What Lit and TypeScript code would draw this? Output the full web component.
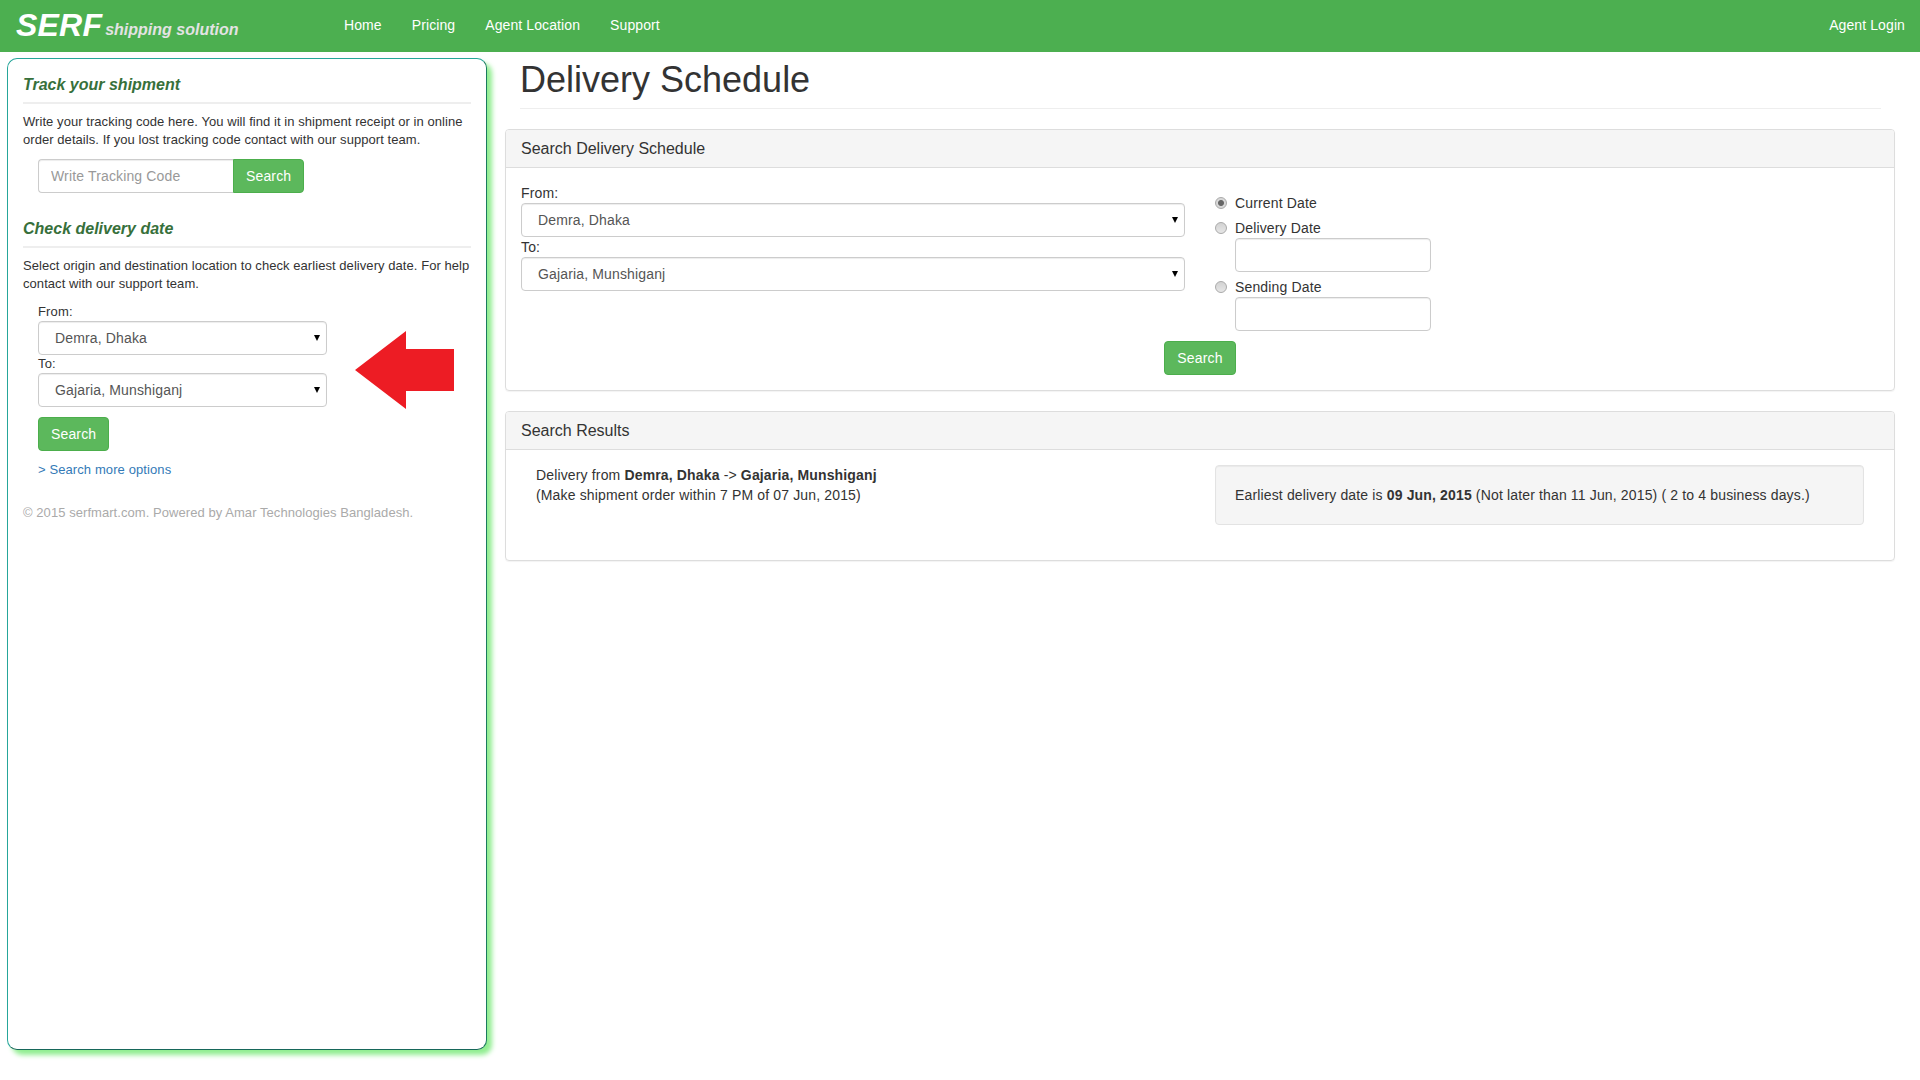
import { LitElement, html, css } from 'lit';

const LOCATIONS = ['Demra, Dhaka', 'Gajaria, Munshiganj'];

class AppRoot extends LitElement {
  static styles = css`
    :host {
      display: block;
      font-family: 'Liberation Sans', Arial, sans-serif;
      font-size: 14px;
      line-height: 20px;
      letter-spacing: 0.15px;
      color: #333;
      background: #fff;
      height: 1080px;
      overflow: hidden;
    }
    * {
      box-sizing: border-box;
    }
    .nav {
      display: flex;
      align-items: flex-start;
      height: 52px;
      background: #4caf50;
      color: #fff;
      letter-spacing: 0.1px;
    }
    .brand {
      display: flex;
      align-items: baseline;
      width: 329px;
      padding: 6px 0 0 16px;
      font-weight: bold;
      font-style: italic;
      white-space: nowrap;
      letter-spacing: 0;
    }
    .brand b {
      font-size: 32px;
      line-height: 38px;
      letter-spacing: 0.2px;
    }
    .brand span {
      position: relative;
      top: -1px;
      margin-left: 3px;
      font-size: 16px;
      color: #e3e3e3;
    }
    .nav a {
      padding: 15px;
      color: #fff;
    }
    .nav .login {
      margin-left: auto;
    }
    .page {
      display: flex;
      align-items: flex-start;
    }
    .side {
      position: relative;
      flex: none;
      width: 480px;
      height: 992px;
      margin: 6px 0 0 7px;
      padding: 16px 15px;
      background: #fff;
      border: 1px solid;
      border-color: #26a69a #1a7a5e #17675a #26a69a;
      border-radius: 10px;
      box-shadow: 5px 5px 5px #90ee90;
    }
    h4 {
      margin: 0;
      padding-bottom: 7px;
      border-bottom: 2px solid #eee;
      font-size: 16px;
      line-height: 20px;
      font-style: italic;
      font-weight: bold;
      color: #37703b;
      letter-spacing: 0;
    }
    .side p {
      margin: 9px 0 10px;
      font-size: 13px;
      line-height: 18px;
      letter-spacing: 0.06px;
      white-space: nowrap;
    }
    .track {
      display: flex;
      margin: 0 0 26px 15px;
    }
    .track input {
      width: 195px;
      border-radius: 4px 0 0 4px;
      border-right: 0;
    }
    .track button {
      width: 71px;
      border-radius: 0 4px 4px 0;
    }
    .side-form {
      margin-left: 15px;
    }
    .side-form label {
      display: block;
      font-size: 13px;
      line-height: 18px;
    }
    .side-form .select {
      width: 289px;
    }
    .side-form button {
      margin-top: 10px;
    }
    .more {
      display: block;
      margin-top: 9px;
      font-size: 13px;
      letter-spacing: 0.1px;
      color: #337ab7;
    }
    .side p.copy {
      margin-top: 24px;
      color: #aaa;
    }
    .arrow {
      position: absolute;
      left: 347px;
      top: 272px;
    }
    input,
    .select select {
      display: block;
      width: 100%;
      height: 34px;
      padding: 6px 12px;
      border: 1px solid #ccc;
      border-radius: 4px;
      background: #fff;
      box-shadow: inset 0 1px 1px rgba(0, 0, 0, 0.075);
      font: inherit;
      font-size: 14px;
      letter-spacing: inherit;
      color: #555;
      outline: none;
    }
    input::placeholder {
      color: #999;
    }
    .select {
      position: relative;
    }
    .select select {
      appearance: none;
      padding-left: 16px;
    }
    .select::after {
      content: '';
      position: absolute;
      right: 7px;
      top: 14px;
      border: 3.5px solid transparent;
      border-top: 6px solid #000;
      border-bottom: 0;
    }
    button {
      height: 34px;
      padding: 6px 12px;
      border: 1px solid #4cae4c;
      border-radius: 4px;
      background: #5cb85c;
      color: #fff;
      font: inherit;
      font-size: 14px;
      letter-spacing: inherit;
    }
    .main {
      flex: none;
      width: 1390px;
      margin-left: 18px;
    }
    .head {
      height: 57px;
      margin: 0 14px 0 15px;
      padding-top: 8px;
      border-bottom: 1px solid #eee;
    }
    h1 {
      margin: 0;
      font-size: 36px;
      line-height: 40px;
      font-weight: 500;
      letter-spacing: 0;
    }
    .panel {
      margin-top: 20px;
      border: 1px solid #ddd;
      border-radius: 4px;
      box-shadow: 0 1px 1px rgba(0, 0, 0, 0.05);
    }
    .panel-head {
      padding: 9px 15px;
      border-bottom: 1px solid #ddd;
      border-radius: 3px 3px 0 0;
      background: #f5f5f5;
      font-size: 16px;
      line-height: 19px;
      letter-spacing: 0;
    }
    .panel-body {
      padding: 15px;
    }
    .cols {
      display: grid;
      grid-template-columns: 1fr 1fr;
      column-gap: 30px;
    }
    .radio {
      display: flex;
      align-items: center;
      gap: 8px;
      margin-top: 5px;
    }
    .radios {
      padding-top: 10px;
    }
    .radios .radio:first-child {
      margin-top: 0;
    }
    .radio input {
      appearance: none;
      flex: none;
      width: 12px;
      height: 12px;
      margin: 0;
      padding: 0;
      border: 1px solid #aaa;
      border-radius: 50%;
      background: linear-gradient(#d2d2d2, #e6e6e6);
      box-shadow: none;
    }
    .radio input:checked {
      background: radial-gradient(circle, #666 0 2.5px, #d8d8d8 3.5px);
    }
    .date {
      width: 196px;
      margin-left: 20px;
    }
    .actions {
      margin-top: 10px;
      text-align: center;
    }
    .route {
      padding-left: 15px;
    }
    .well {
      display: flex;
      align-items: center;
      height: 60px;
      margin-right: 15px;
      padding: 0 19px;
      border: 1px solid #e3e3e3;
      border-radius: 4px;
      background: #f5f5f5;
      box-shadow: inset 0 1px 1px rgba(0, 0, 0, 0.05);
    }
    .results .panel-body {
      padding-bottom: 35px;
    }
  `;

  private renderSelect(value: string) {
    return html`<div class="select">
      <select>
        ${LOCATIONS.map((loc) => html`<option ?selected=${loc === value}>${loc}</option>`)}
      </select>
    </div>`;
  }

  render() {
    return html`
      <header class="nav">
        <div class="brand"><b>SERF</b><span>shipping solution</span></div>
        <a>Home</a>
        <a>Pricing</a>
        <a>Agent Location</a>
        <a>Support</a>
        <a class="login">Agent Login</a>
      </header>
      <div class="page">
        <aside class="side">
          <h4>Track your shipment</h4>
          <p>
            Write your tracking code here. You will find it in shipment receipt or in online<br />
            order details. If you lost tracking code contact with our support team.
          </p>
          <div class="track">
            <input placeholder="Write Tracking Code" />
            <button>Search</button>
          </div>
          <h4>Check delivery date</h4>
          <p>
            Select origin and destination location to check earliest delivery date. For help<br />
            contact with our support team.
          </p>
          <div class="side-form">
            <label>From:</label>
            ${this.renderSelect(LOCATIONS[0])}
            <label>To:</label>
            ${this.renderSelect(LOCATIONS[1])}
            <button>Search</button>
            <a class="more">&gt; Search more options</a>
          </div>
          <p class="copy">© 2015 serfmart.com. Powered by Amar Technologies Bangladesh.</p>
          <svg class="arrow" width="99" height="78" viewBox="0 0 99 78">
            <path d="M0 39 L51 0 L51 18 L99 18 L99 60 L51 60 L51 78 Z" fill="#ed1c24" />
          </svg>
        </aside>
        <main class="main">
          <div class="head"><h1>Delivery Schedule</h1></div>
          <section class="panel">
            <div class="panel-head">Search Delivery Schedule</div>
            <div class="panel-body">
              <div class="cols">
                <div>
                  <label>From:</label>
                  ${this.renderSelect(LOCATIONS[0])}
                  <label>To:</label>
                  ${this.renderSelect(LOCATIONS[1])}
                </div>
                <div class="radios">
                  <label class="radio"><input type="radio" name="d" checked />Current Date</label>
                  <label class="radio"><input type="radio" name="d" />Delivery Date</label>
                  <input class="date" />
                  <label class="radio"><input type="radio" name="d" />Sending Date</label>
                  <input class="date" />
                </div>
              </div>
              <div class="actions"><button>Search</button></div>
            </div>
          </section>
          <section class="panel results">
            <div class="panel-head">Search Results</div>
            <div class="panel-body">
              <div class="cols">
                <div class="route">
                  Delivery from <b>Demra, Dhaka</b> -&gt; <b>Gajaria, Munshiganj</b><br />
                  (Make shipment order within 7 PM of 07 Jun, 2015)
                </div>
                <div class="well">
                  <span>
                    Earliest delivery date is <b>09 Jun, 2015</b> (Not later than 11 Jun, 2015) ( 2 to
                    4 business days.)
                  </span>
                </div>
              </div>
            </div>
          </section>
        </main>
      </div>
    `;
  }
}

customElements.define('app-root', AppRoot);
